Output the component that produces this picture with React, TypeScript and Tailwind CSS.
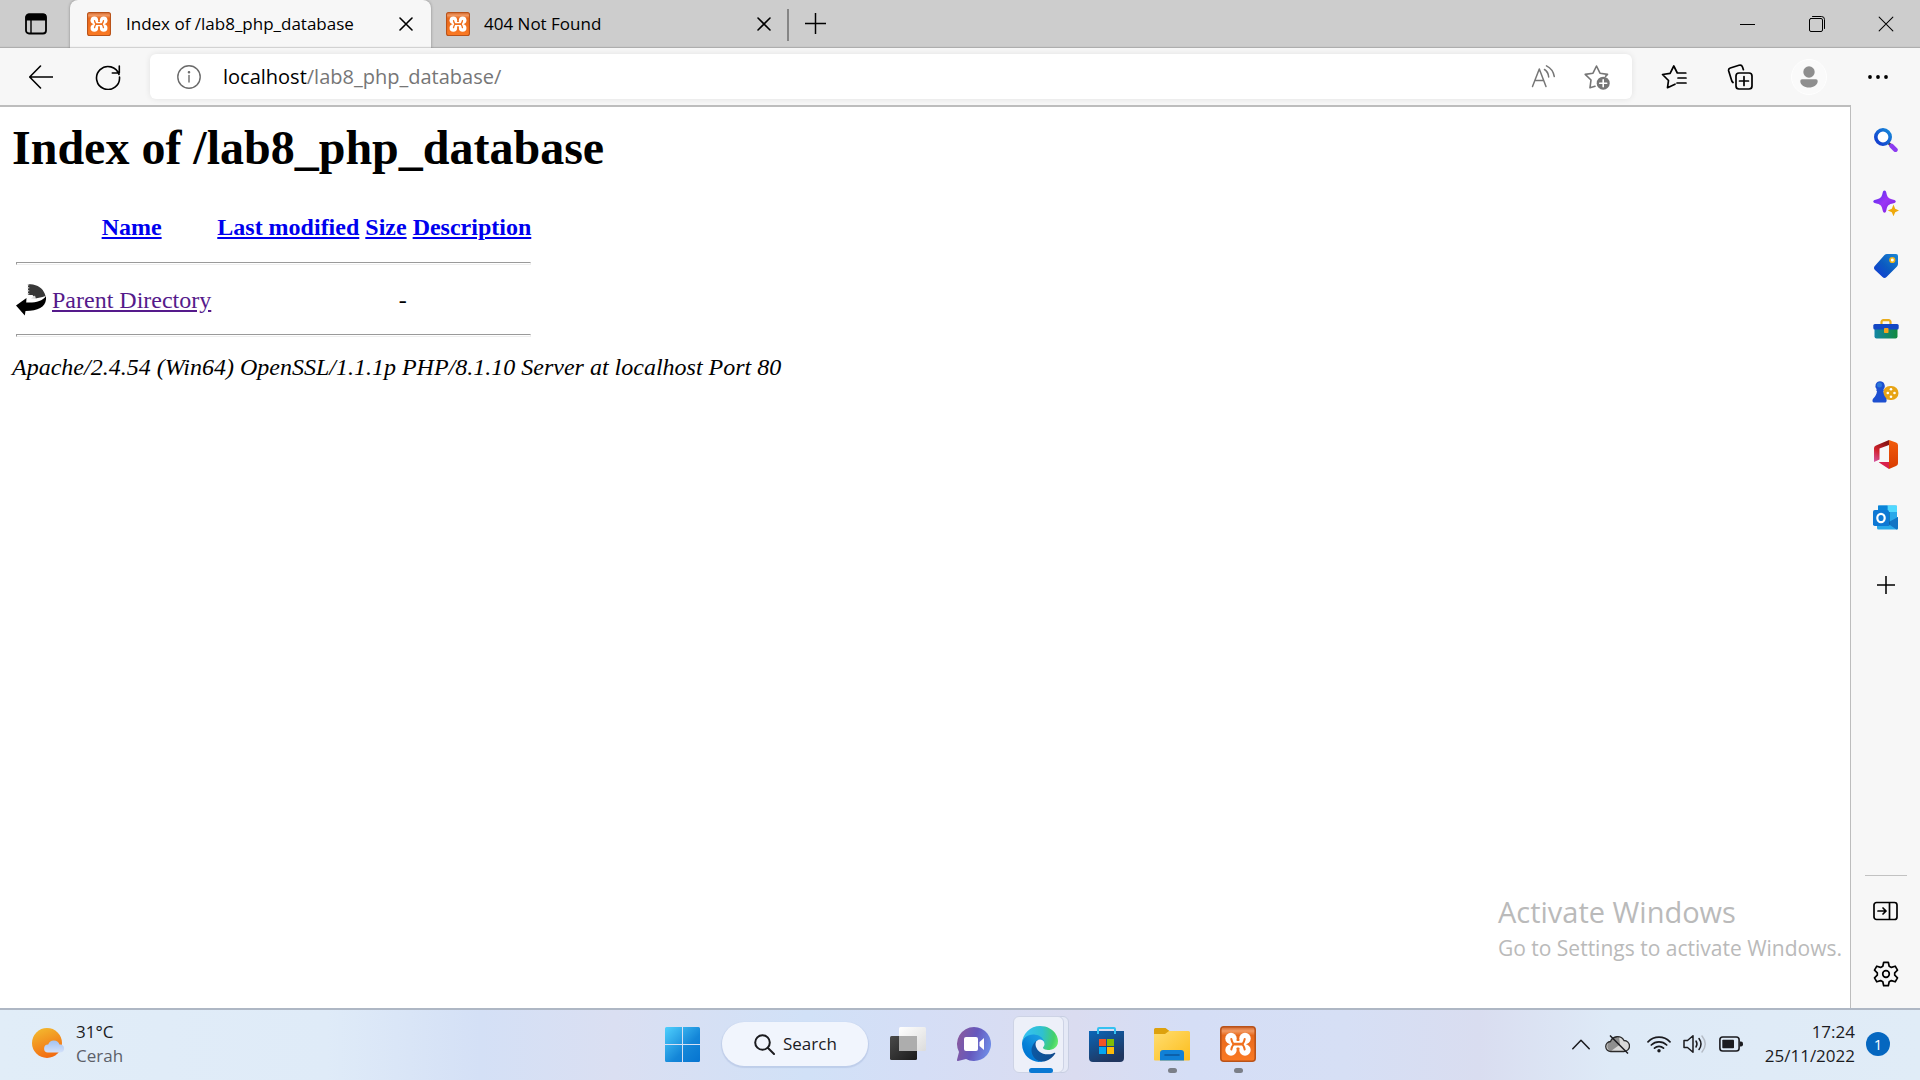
import React from 'react';

type IconProps = { className?: string };

const line = {
  fill: 'none',
  stroke: 'currentColor',
  strokeLinecap: 'round' as const,
  strokeLinejoin: 'round' as const,
};

function Xampp({ className = 'size-6', id }: IconProps & { id: string }) {
  return (
    <svg className={className} viewBox="0 0 36 36" aria-hidden="true">
      <defs>
        <linearGradient id={id} x1="0" y1="0" x2="0" y2="1">
          <stop offset="0" stopColor="#d0642a" />
          <stop offset="0.12" stopColor="#f29a63" />
          <stop offset="0.25" stopColor="#e8691c" />
          <stop offset="1" stopColor="#fb7a24" />
        </linearGradient>
      </defs>
      <rect x="0.8" y="0.8" width="34.4" height="34.4" rx="3" fill={`url(#${id})`} stroke="#b9531a" strokeWidth="1.6" />
      <g fill="#fff">
        <circle cx="11" cy="12.500" r="5.700" />
        <circle cx="25" cy="12.500" r="5.700" />
        <circle cx="11" cy="24" r="5.700" />
        <circle cx="25" cy="24" r="5.700" />
        <path d="M8.500 15h19l-1.500 3.200 1.500 3.300h-19L10 18.200zM14 13l4 2.500 4-2.500v10.500L18 21l-4 2.500z" />
      </g>
      <path
        d="M11.300 13q.4 2.600 2.200 5.200-1.800 2.600-2.200 5.300M24.700 13q-.4 2.600-2.200 5.200 1.800 2.600 2.200 5.300"
        fill="none"
        stroke="#f0701f"
        strokeWidth="2"
        strokeLinecap="round"
      />
      <path d="M14 18.200h8" stroke="#f0701f" strokeWidth="2.800" strokeLinecap="round" />
    </svg>
  );
}

function Cross({ className = 'size-3.5', width = 1.6 }: IconProps & { width?: number }) {
  return (
    <svg className={className} viewBox="0 0 14 14" {...line} strokeWidth={width} aria-hidden="true">
      <path d="M1 1l12 12M13 1L1 13" />
    </svg>
  );
}

function Plus({ className, width = 1.6 }: IconProps & { width?: number }) {
  return (
    <svg className={className} viewBox="0 0 20 20" {...line} strokeLinecap="butt" strokeWidth={width} aria-hidden="true">
      <path d="M10 0v20M0 10h20" />
    </svg>
  );
}

function TabStrip() {
  return (
    <header className="flex h-12 shrink-0 items-stretch bg-[#cdcdcd]">
      <button aria-label="Tab actions menu" className="flex w-[70px] items-center justify-center pl-0.5">
        <svg className="size-[22px]" viewBox="0 0 22 22" {...line} strokeWidth="1.800" aria-hidden="true">
          <rect x="1" y="1.500" width="20" height="19" rx="3" />
          <path d="M1.500 5V4a2.500 2.500 0 0 1 2.500-2.500h14A2.500 2.500 0 0 1 20.500 4v2.500h-19z" fill="currentColor" />
          <path d="M6 7v13" strokeWidth="1.400" />
        </svg>
      </button>
      <div role="tablist" className="flex">
        <div role="tab" aria-selected="true" className="flex w-[361px] items-center rounded-t-lg bg-[#f7f7f7] pl-[17px] pr-[18px] shadow-[0_0_3px_rgba(0,0,0,0.35)]">
          <Xampp id="fav-a" />
          <span className="ml-[15px] flex-1 whitespace-nowrap text-[17px] leading-6">Index of /lab8_php_database</span>
          <button aria-label="Close tab">
            <Cross />
          </button>
        </div>
        <div role="tab" aria-selected="false" className="flex w-[358px] items-center border-r-2 border-[#858585] [border-image:linear-gradient(transparent_10px,#858585_10px,#858585_40px,transparent_40px)_2] pl-[15px] pr-4">
          <Xampp id="fav-b" />
          <span className="ml-[14px] flex-1 whitespace-nowrap text-[17px] leading-6">404 Not Found</span>
          <button aria-label="Close tab">
            <Cross />
          </button>
        </div>
      </div>
      <button aria-label="New tab" className="flex w-[52px] items-center justify-center pb-0.5">
        <Plus className="size-[21px]" width={1.400} />
      </button>
      <div className="flex-1" />
      <button aria-label="Minimize" className="flex w-[69px] items-center justify-center">
        <svg className="h-[3px] w-[15px]" viewBox="0 0 15 3" aria-hidden="true">
          <path d="M0 1.500h15" stroke="#000" />
        </svg>
      </button>
      <button aria-label="Restore" className="flex w-[69px] items-center justify-center">
        <svg className="size-4" viewBox="0 0 16 16" {...line} aria-hidden="true">
          <rect x="0.500" y="2.500" width="13" height="13" rx="1.500" />
          <path d="M3.500.5h9a3 3 0 0 1 3 3v9" />
        </svg>
      </button>
      <button aria-label="Close" className="flex w-[69px] items-center justify-center">
        <Cross className="size-4" width={0.900} />
      </button>
    </header>
  );
}

function Toolbar() {
  return (
    <nav className="flex h-[57px] shrink-0 items-center bg-[#f7f7f7] shadow-[0_-1px_1px_rgba(0,0,0,0.15)]">
      <button aria-label="Back" className="flex w-[82px] justify-center">
        <svg className="size-6" viewBox="0 0 24 24" {...line} strokeWidth="1.600" aria-hidden="true">
          <path d="M23.500 12H.8M11.500 1L.7 12l10.800 11" />
        </svg>
      </button>
      <button aria-label="Refresh" className="flex w-[52px] justify-center">
        <svg className="size-[26px]" viewBox="0 0 26 26" {...line} strokeWidth="1.600" aria-hidden="true">
          <path d="M24 10.500A11.500 11.500 0 1 0 24.500 13M24.300 2v7h-7" />
        </svg>
      </button>
      <div className="ml-4 flex h-[45px] flex-1 items-center rounded-md bg-white pl-[27px] pr-[22px] shadow-[0_0_6px_rgba(0,0,0,0.09)]">
        <svg className="size-6 text-[#6b6b6b]" viewBox="0 0 24 24" {...line} strokeWidth="1.400" aria-hidden="true">
          <circle cx="12" cy="12" r="11.200" />
          <path d="M12 10.500v6.500" />
          <circle cx="12" cy="7.200" r="0.600" fill="currentColor" />
        </svg>
        <div className="ml-[22px] flex-1 whitespace-nowrap text-[20px] leading-7 text-[#767676]">
          <span className="text-black">localhost</span>/lab8_php_database/
        </div>
        <button aria-label="Read aloud" className="text-[#767676]">
          <svg className="size-6" viewBox="0 0 24 24" {...line} strokeWidth="1.500" aria-hidden="true">
            <path d="M1.500 21.500L8.300 4l6.700 17.500M4 15.500h8.500M13.500 4.500q3.800 2.500 4.200 7.500M15.500.8Q22 4 23.300 11.500" />
          </svg>
        </button>
        <button aria-label="Add to favorites" className="ml-[29px] text-[#767676]">
          <svg className="size-[26px]" viewBox="0 0 26 26" {...line} strokeWidth="1.600" aria-hidden="true">
            <path d="M11 22.200l-5 1.500 1-7.700-5.800-5.600 7.800-1.200L12.500 2 16 9.200l7.500 1.200-2 2" />
            <circle cx="19.200" cy="19.200" r="6.500" fill="currentColor" stroke="none" />
            <path d="M19.200 15.700v7M15.700 19.200h7" stroke="#fff" />
          </svg>
        </button>
      </div>
      <button aria-label="Favorites" className="ml-2 flex w-[67px] justify-center">
        <svg className="size-[26px]" viewBox="0 0 26 26" {...line} strokeWidth="1.700" aria-hidden="true">
          <path d="M14 20.200l-7.500 3.500 1-7.200-6-6 7.600-1.200L12.800 2l3.500 7h8.500M17 14h8M16 19h9" />
        </svg>
      </button>
      <button aria-label="Collections" className="flex w-[66px] justify-center">
        <svg className="size-[26px]" viewBox="0 0 26 26" {...line} strokeWidth="1.700" aria-hidden="true">
          <rect x="9" y="9" width="16" height="16" rx="3" />
          <path d="M17 12.500v9M12.500 17h9M6 18.500A4 4 0 0 1 4.500 16L1.700 7a2.500 2.500 0 0 1 1.600-3L12 1.300A2.800 2.800 0 0 1 15.500 3l.9 2.700" />
        </svg>
      </button>
      <button aria-label="Profile" className="ml-[18px] mr-[17px] flex size-9 items-center justify-center rounded-full border border-white bg-[#fafafa]">
        <svg className="size-[22px] text-[#8e8e8e]" viewBox="0 0 22 22" fill="currentColor" aria-hidden="true">
          <circle cx="11" cy="6" r="5.700" />
          <path d="M4 13.300h14a1.700 1.700 0 0 1 1.700 1.700c0 4-4 6.500-8.700 6.500S2.300 19 2.300 15A1.700 1.700 0 0 1 4 13.300z" />
        </svg>
      </button>
      <button aria-label="Settings and more" className="mr-2 flex w-[68px] justify-center">
        <svg className="h-1 w-5" viewBox="0 0 20 4" aria-hidden="true">
          <circle cx="2" cy="2" r="1.900" />
          <circle cx="10" cy="2" r="1.900" />
          <circle cx="18" cy="2" r="1.900" />
        </svg>
      </button>
    </nav>
  );
}

function Rule() {
  return (
    <tr>
      <td colSpan={5}>
        <hr className="my-3 h-[3px] border border-[#9a9a9a] border-b-[#eeeeee] border-r-[#eeeeee]" />
      </td>
    </tr>
  );
}

function DirectoryIndex() {
  const heads = ['Last modified', 'Size', 'Description'];
  return (
    <main className="relative min-w-0 flex-1 border-r border-[#bdbdbd] bg-white p-3 font-['Liberation_Serif',serif] text-2xl leading-7">
      <h1 className="mb-[30px] text-5xl leading-[57px] font-bold">Index of /lab8_php_database</h1>
      <table className="border-separate border-spacing-[2px] [&_td]:p-[2px] [&_th]:p-[2px]">
        <thead>
          <tr className="h-[38px]">
            <th className="w-[33px]" />
            <th>
              <a href="#name" className="text-[#0000ee] underline">Name</a>
            </th>
            {heads.map((h) => (
              <th key={h}>
                <a href="#sort" className="whitespace-nowrap text-[#0000ee] underline">{h}</a>
              </th>
            ))}
          </tr>
        </thead>
        <tbody>
          <Rule />
          <tr>
            <td>
              <svg className="h-[33px] w-[30px]" viewBox="0 0 30 33" aria-hidden="true">
                <path d="M12 1l5 .5C24 3 28 7 29.500 13l-3 1-7 1.500-3-3.500H12z" fill="#383838" />
                <path d="M12.500 1v11.500" stroke="#b5b5b5" strokeWidth="1.500" strokeDasharray="1.500 1.500" />
                <path d="M15 15.500l4-3 1 3.500z" fill="#ddd" />
                <path d="M30 13c1 10-6 15-20.500 15l-.7 4.500L0 22.500l10.500-7.500-.3 4.500c9 .5 16-1 19.800-6.500z" fill="#000" />
              </svg>
            </td>
            <td>
              <a href="#parent" className="whitespace-nowrap text-[#551a8b] underline">Parent Directory</a>
            </td>
            <td />
            <td className="text-right">-</td>
            <td />
          </tr>
          <Rule />
        </tbody>
      </table>
      <address className="italic">Apache/2.4.54 (Win64) OpenSSL/1.1.1p PHP/8.1.10 Server at localhost Port 80</address>
      <aside className="absolute right-2 bottom-11 font-['Open_Sans',sans-serif] text-[#bababa]">
        <p className="text-[29px] leading-10">Activate Windows</p>
        <p className="text-[21px] leading-8">Go to Settings to activate Windows.</p>
      </aside>
    </main>
  );
}

const SearchIcon = () => (
  <svg className="size-6" viewBox="0 0 24 24" aria-hidden="true">
    <defs>
      <linearGradient id="lens" x1="1" y1="0" x2="0" y2="1">
        <stop offset="0" stopColor="#1789d8" />
        <stop offset="1" stopColor="#1338cf" />
      </linearGradient>
    </defs>
    <path d="M14.500 15l3 3" stroke="#444" strokeWidth="2.500" />
    <path d="M17.500 17.800l4 4" stroke="#8c3cf0" strokeWidth="4.500" strokeLinecap="round" />
    <circle cx="9" cy="9" r="7.200" fill="#fff" stroke="url(#lens)" strokeWidth="3.600" />
  </svg>
);

const SparkleIcon = () => (
  <svg className="size-[26px]" viewBox="0 0 26 26" aria-hidden="true">
    <defs>
      <linearGradient id="spark" x1="0" y1="0" x2="1" y2="1">
        <stop offset="0" stopColor="#4b2ff0" />
        <stop offset="0.500" stopColor="#9a35f5" />
        <stop offset="1" stopColor="#7a1ee0" />
      </linearGradient>
    </defs>
    <path d="M11.500.5c1 0 1.500.7 1.800 2 1 5 2.200 6.200 7.200 7.200 3 .7 3 2.900 0 3.600-5 1-6.200 2.200-7.200 7.200-.7 3-2.900 3-3.600 0-1-5-2.200-6.200-7.200-7.200-3-.7-3-2.900 0-3.600 5-1 6.200-2.200 7.200-7.200.3-1.300.8-2 1.800-2z" fill="url(#spark)" />
    <path d="M20.500 14.500l1.700 4.300 4 1.700-4 1.700-1.700 4-1.700-4-4-1.700 4-1.700z" fill="#efa90c" />
  </svg>
);

const TagIcon = () => (
  <svg className="size-[26px]" viewBox="0 0 26 26" aria-hidden="true">
    <defs>
      <linearGradient id="tag" x1="1" y1="0" x2="0" y2="1">
        <stop offset="0" stopColor="#1a86d6" />
        <stop offset="0.500" stopColor="#0c5cc0" />
        <stop offset="1" stopColor="#1437d8" />
      </linearGradient>
    </defs>
    <path d="M14 1h9a2 2 0 0 1 2 2v8a4 4 0 0 1-1 2.500L13.500 24a3 3 0 0 1-4 0L2 17a3 3 0 0 1 0-4.200L11.500 2A4 4 0 0 1 14 1z" fill="url(#tag)" />
    <circle cx="19.300" cy="7" r="2.300" fill="#fff" stroke="#f0b414" strokeWidth="1.600" />
  </svg>
);

const ToolboxIcon = () => (
  <svg className="h-5 w-[26px]" viewBox="0 0 26 20" aria-hidden="true">
    <defs>
      <linearGradient id="box" x1="0" y1="0" x2="1" y2="0">
        <stop offset="0" stopColor="#1285a5" />
        <stop offset="1" stopColor="#138a3d" />
      </linearGradient>
    </defs>
    <path d="M8.500 6V3A1.800 1.800 0 0 1 10.300 1.200h5.400A1.800 1.800 0 0 1 17.500 3v3" fill="none" stroke="#e9ac1c" strokeWidth="2.200" />
    <path d="M1.500 9h23v8.500a2 2 0 0 1-2 2h-19a2 2 0 0 1-2-2z" fill="url(#box)" />
    <rect x="0.300" y="5" width="25.400" height="5.500" rx="1.500" fill="#1347c4" />
    <rect x="11" y="9" width="4.500" height="5" rx="0.800" fill="#f6a31a" />
  </svg>
);

const GamesIcon = () => (
  <svg className="h-[22px] w-[27px]" viewBox="0 0 27 22" aria-hidden="true">
    <rect x="11" y="5" width="15.500" height="14" rx="7" fill="#e7a416" />
    <g fill="#fff">
      <circle cx="19" cy="8.300" r="1.300" />
      <circle cx="15.800" cy="12" r="1.300" />
      <circle cx="22.500" cy="12" r="1.300" />
      <circle cx="19" cy="15.700" r="1.300" />
    </g>
    <path d="M8 .3a4.700 4.700 0 0 1 3.400 8c.6.600.6 1.500-.2 1.700.3 3 1.200 5 2.800 7 1 1 .8 4.500-.5 4.500H1.800C.3 21.500 0 18.500 1.500 17.300 3.500 15.500 4.700 13 5 10c-.9-.2-.9-1.200-.3-1.700A4.700 4.700 0 0 1 8 .3z" fill="#1d4fd0" />
    <circle cx="7.500" cy="4" r="2.500" fill="#2c77d8" />
  </svg>
);

const OfficeIcon = () => (
  <svg className="h-[29px] w-6" viewBox="0 0 24 29" aria-hidden="true">
    <defs>
      <linearGradient id="office" x1="0.500" y1="0" x2="0" y2="1">
        <stop offset="0" stopColor="#8c1414" />
        <stop offset="0.500" stopColor="#d3232f" />
        <stop offset="1" stopColor="#d459a8" />
      </linearGradient>
      <linearGradient id="office-r" x1="0" y1="0" x2="0" y2="1">
        <stop offset="0" stopColor="#f25c0c" />
        <stop offset="1" stopColor="#d83b01" />
      </linearGradient>
    </defs>
    <path d="M15 0L2 5.500A3 3 0 0 0 0 8.500V22l5.500-2.500v-11L15 5z" fill="url(#office)" />
    <path d="M5 22.500L15 29v-7H6.500C5 22 4.500 22.200 5 22.500z" fill="#d9214c" />
    <path d="M15 0l7 2.500a3 3 0 0 1 2 2.800v18a3 3 0 0 1-2 2.800L15 29z" fill="url(#office-r)" />
  </svg>
);

const OutlookIcon = () => (
  <svg className="size-[25px]" viewBox="0 0 25 25" aria-hidden="true">
    <path d="M5 2a1.500 1.500 0 0 1 1.500-1.500h16A1.500 1.500 0 0 1 24 2v13H5z" fill="#28a8ea" />
    <path d="M14.500.5H24V7h-9.500z" fill="#50d9ff" />
    <path d="M5 .5h9.500V7H5z" fill="#0a84d8" />
    <path d="M4 14l21-2v11a1.500 1.500 0 0 1-1.500 1.500h-18A1.500 1.500 0 0 1 4 23z" fill="#28a8ea" />
    <path d="M25 12L14 18l9.500 6.500A1.500 1.500 0 0 0 25 23z" fill="#1474c4" />
    <path d="M17 7v12a2 2 0 0 1-2 2H5V7z" fill="#0a4d86" opacity="0.500" />
    <rect x="0" y="5" width="16" height="16" rx="1.800" fill="#0f78d4" />
    <ellipse cx="8" cy="13" rx="3.700" ry="4.200" fill="none" stroke="#fff" strokeWidth="2.200" />
  </svg>
);

function Sidebar() {
  const apps: [string, () => React.JSX.Element][] = [
    ['Search', SearchIcon],
    ['Discover', SparkleIcon],
    ['Shopping', TagIcon],
    ['Tools', ToolboxIcon],
    ['Games', GamesIcon],
    ['Office', OfficeIcon],
    ['Outlook', OutlookIcon],
  ];
  return (
    <aside className="flex w-[69px] shrink-0 flex-col bg-[#f7f7f7] pt-[3px] pb-[3px]">
      {apps.map(([name, Icon]) => (
        <button key={name} aria-label={name} className="flex h-[63px] items-center justify-center">
          <Icon />
        </button>
      ))}
      <button aria-label="Customize sidebar" className="mt-1 flex h-[63px] items-center justify-center">
        <Plus className="size-[18px]" width={1.700} />
      </button>
      <div className="mx-auto mt-auto mb-[3px] h-px w-[42px] bg-[#c2c2c2]" />
      <button aria-label="Hide sidebar" className="flex h-[63px] items-center justify-center">
        <svg className="h-5 w-[25px]" viewBox="0 0 25 20" {...line} strokeWidth="1.700" aria-hidden="true">
          <rect x="1" y="1.500" width="23" height="17" rx="2.500" />
          <path d="M16.500 2v16M5 10h8M10 7l3 3-3 3" />
        </svg>
      </button>
      <button aria-label="Settings" className="flex h-[63px] items-center justify-center">
        <svg className="size-[26px]" viewBox="0 0 26 26" {...line} strokeWidth="1.700" aria-hidden="true">
          <circle cx="13" cy="13" r="3.300" />
          <path d="M10.700 1.300h4.600l.9 3.900 2.200 1.200 3.800-1.200 2.300 4-2.800 2.600v2.400l2.800 2.600-2.300 4-3.800-1.200-2.200 1.200-.9 3.900h-4.600l-.9-3.900-2.200-1.200-3.800 1.200-2.300-4 2.800-2.600v-2.400L1.500 9.200l2.300-4 3.800 1.200 2.200-1.200z" />
        </svg>
      </button>
    </aside>
  );
}

function Slot({ label, children, running }: { label: string; children: React.ReactNode; running?: boolean }) {
  return (
    <button aria-label={label} className="relative flex h-full w-[66px] items-center justify-center">
      {children}
      {running && <span className="absolute bottom-[5px] h-[5px] w-[9px] rounded-full bg-[#7b7f88]" />}
    </button>
  );
}

function Taskbar() {
  return (
    <footer className="grid h-[72px] shrink-0 grid-cols-[1fr_auto_1fr] items-stretch border-t-2 border-[#aeb7c4] bg-[linear-gradient(90deg,#e1edf8_0%,#dfebf8_17%,#d4e0f6_25%,#dadff2_32%,#d1e1f7_42%,#d5def6_48%,#dadcf0_56%,#d5def6_62%,#d6dff5_70%,#d9ddf0_77%,#deeaf7_84%,#e0ecf7_100%)] pb-[2px]">
      <button aria-label="Weather" className="flex items-center pl-8 text-left">
        <svg className="h-8 w-[34px]" viewBox="0 0 34 32" aria-hidden="true">
          <defs>
            <linearGradient id="sun" x1="0.300" y1="0" x2="0.700" y2="1">
              <stop offset="0" stopColor="#f3b72e" />
              <stop offset="1" stopColor="#f2660f" />
            </linearGradient>
            <linearGradient id="cloud" x1="0" y1="0" x2="0" y2="1">
              <stop offset="0" stopColor="#a3c2f2" />
              <stop offset="1" stopColor="#d3e1fa" />
            </linearGradient>
          </defs>
          <circle cx="15" cy="15" r="15" fill="url(#sun)" />
          <path d="M16 24.500a4 4 0 0 1 .2-8A6 6 0 0 1 27.500 16.500a4 4 0 0 1 1 8z" fill="url(#cloud)" />
        </svg>
        <span className="ml-[10px] text-[17px] leading-6 text-[#1b1b1f]">
          31°C
          <span className="block text-[#5c6068]">Cerah</span>
        </span>
      </button>

      <div className="flex items-center">
        <Slot label="Start">
          <svg className="size-[35px]" viewBox="0 0 35 35" aria-hidden="true">
            <defs>
              <linearGradient id="win" x1="0" y1="0" x2="1" y2="1" gradientUnits="objectBoundingBox">
                <stop offset="0" stopColor="#4fd0fd" />
                <stop offset="0.600" stopColor="#1486d8" />
                <stop offset="1" stopColor="#0674d0" />
              </linearGradient>
            </defs>
            <path d="M1.500 0H17v17H0V1.500A1.500 1.500 0 0 1 1.500 0zM18 0h15.500A1.500 1.500 0 0 1 35 1.500V17H18zM0 18h17v17H1.500A1.500 1.500 0 0 1 0 33.500zM18 18h17v15.500a1.500 1.500 0 0 1-1.500 1.500H18z" fill="url(#win)" />
          </svg>
        </Slot>
        <button className="mx-[7px] flex h-11 w-[146px] items-center rounded-full bg-[#f1f5fd] pl-8 text-[17px] text-[#1b1b1f] shadow-[0_1px_1px_1px_rgba(120,140,190,0.22)]">
          <svg className="size-[21px]" viewBox="0 0 21 21" {...line} strokeWidth="2" aria-hidden="true">
            <circle cx="8.500" cy="8.500" r="7.300" />
            <path d="M14 14l6 6" />
          </svg>
          <span className="ml-2">Search</span>
        </button>
        <Slot label="Task view">
          <svg className="size-9" viewBox="0 0 36 36" aria-hidden="true">
            <defs>
              <linearGradient id="tv" x1="0" y1="0" x2="1" y2="1">
                <stop offset="0" stopColor="#4a4a4a" />
                <stop offset="1" stopColor="#1a1a1a" />
              </linearGradient>
              <linearGradient id="tw" x1="0" y1="0" x2="1" y2="1">
                <stop offset="0" stopColor="#ffffff" />
                <stop offset="1" stopColor="#dcdcdc" />
              </linearGradient>
            </defs>
            <rect x="0" y="10" width="27" height="24" rx="1.500" fill="url(#tv)" />
            <rect x="9" y="1" width="27" height="24" rx="1.500" fill="url(#tw)" />
            <path d="M9 10h18v15H9z" fill="#adadad" />
          </svg>
        </Slot>
        <Slot label="Chat">
          <svg className="size-[34px]" viewBox="0 0 34 34" aria-hidden="true">
            <defs>
              <linearGradient id="chat" x1="0" y1="0.300" x2="1" y2="0.600">
                <stop offset="0" stopColor="#8a5a9e" />
                <stop offset="0.500" stopColor="#6558bd" />
                <stop offset="1" stopColor="#6f8ee8" />
              </linearGradient>
            </defs>
            <path d="M17 0a17 17 0 1 1-8 32L1 34c-.8.200-1.200-.5-1-1.200L2 25A17 17 0 0 1 17 0z" fill="url(#chat)" />
            <rect x="7" y="10" width="14" height="14" rx="2" fill="#fff" />
            <path d="M22.500 15l4.500-4v12l-4.500-4z" fill="#fff" />
          </svg>
        </Slot>
        <button aria-label="Microsoft Edge" className="relative flex h-full w-[66px] items-center justify-center">
          <span className="absolute top-[6px] right-1 h-[57px] w-10 rounded-md border border-[#c8cfe2] bg-[#e5e9f6]" />
          <span className="absolute top-[6px] left-[6px] h-[57px] w-[51px] rounded-md border border-[#cdd3e5] bg-[#edf0f9]" />
          <svg className="relative size-9" viewBox="0 0 256 256" aria-hidden="true">
            <defs>
              <linearGradient id="edge-a" x1="63" y1="177" x2="241" y2="177" gradientUnits="userSpaceOnUse">
                <stop offset="0" stopColor="#0c59a4" />
                <stop offset="1" stopColor="#114a8b" />
              </linearGradient>
              <linearGradient id="edge-b" x1="157" y1="95" x2="46" y2="216" gradientUnits="userSpaceOnUse">
                <stop offset="0" stopColor="#1b9de2" />
                <stop offset="0.300" stopColor="#1595df" />
                <stop offset="0.700" stopColor="#0680d7" />
                <stop offset="1" stopColor="#0078d4" />
              </linearGradient>
              <radialGradient id="edge-c" cx="26" cy="50" r="240" gradientUnits="userSpaceOnUse">
                <stop offset="0" stopColor="#35c1f1" />
                <stop offset="0.500" stopColor="#2fc0d0" />
                <stop offset="0.850" stopColor="#44d06b" />
                <stop offset="1" stopColor="#66eb6e" />
              </radialGradient>
            </defs>
            <path d="M231 190.500c-3.400 1.800-6.900 3.400-10.500 4.700a101.900 101.900 0 0 1-35.900 6.500c-47.300 0-88.500-32.500-88.500-74.300a31.500 31.500 0 0 1 16.400-27.300c-42.800 1.800-53.800 46.400-53.800 72.500 0 74 68.100 81.400 82.800 81.400 7.900 0 19.800-2.300 27-4.600l1.300-.4a128.300 128.300 0 0 0 66.600-52.800 4 4 0 0 0-5.400-5.700z" fill="url(#edge-a)" />
            <path d="M105.700 241.400a79.200 79.200 0 0 1-22.700-21.300 80.700 80.700 0 0 1 29.500-120c3.200-1.500 8.500-4.100 15.600-4a32.400 32.400 0 0 1 25.700 13 31.900 31.900 0 0 1 6.300 18.700c0-.2 24.500-79.600-80-79.600-43.900 0-80 41.700-80 78.200a130.200 130.200 0 0 0 12.100 56 128 128 0 0 0 156.400 67 75.500 75.500 0 0 1-62.800-8z" fill="url(#edge-b)" />
            <path d="M152.300 148.900c-.8 1-3.300 2.500-3.300 5.700 0 2.600 1.700 5.100 4.700 7.200 14.400 10 41.500 8.700 41.600 8.700a59.600 59.600 0 0 0 30.300-8.300 61.400 61.400 0 0 0 30.400-52.900c.3-22.400-8-37.300-11.300-43.900C223.500 23.900 177.700 0 128 0A128 128 0 0 0 0 126.200c.5-36.500 36.800-66 80-66 3.500 0 23.500.3 42 10a72.600 72.600 0 0 1 30.900 29.300c6.100 10.600 7.200 24.100 7.200 29.500s-2.700 13.300-7.800 19.900z" fill="url(#edge-c)" />
          </svg>
          <span className="absolute bottom-[5px] left-[22px] h-[5px] w-6 rounded-full bg-[#0a79d3]" />
        </button>
        <Slot label="Microsoft Store">
          <svg className="size-[35px]" viewBox="0 0 35 35" aria-hidden="true">
            <defs>
              <linearGradient id="store" x1="0" y1="0" x2="0.500" y2="1">
                <stop offset="0" stopColor="#0a66b8" />
                <stop offset="1" stopColor="#20365f" />
              </linearGradient>
            </defs>
            <path d="M0 4h35v27a4 4 0 0 1-4 4H4a4 4 0 0 1-4-4z" fill="url(#store)" />
            <path d="M9 7V2a1 1 0 0 1 1-1h15a1 1 0 0 1 1 1v5" fill="none" stroke="#35c1f1" strokeWidth="2" />
            <path d="M10 12h7v7h-7z" fill="#f35325" />
            <path d="M18 12h7v7h-7z" fill="#81bc06" />
            <path d="M10 20h7v7h-7z" fill="#05a6f0" />
            <path d="M18 20h7v7h-7z" fill="#ffba08" />
          </svg>
        </Slot>
        <Slot label="File Explorer" running>
          <svg className="size-9" viewBox="0 0 36 36" aria-hidden="true">
            <defs>
              <linearGradient id="folder" x1="0" y1="0" x2="1" y2="1">
                <stop offset="0" stopColor="#ffdd70" />
                <stop offset="1" stopColor="#fcbd1c" />
              </linearGradient>
            </defs>
            <path d="M0 3.500A1.500 1.500 0 0 1 1.500 2h10l4 3v6H0z" fill="#dda10d" />
            <path d="M0 8h11l4-3h19.500A1.500 1.500 0 0 1 36 6.500v27a1 1 0 0 1-1 1H1a1 1 0 0 1-1-1z" fill="url(#folder)" />
            <path d="M6 34.500V27a3 3 0 0 1 3-3h18a3 3 0 0 1 3 3v7.500z" fill="#1080d6" />
            <path d="M11 29h14" stroke="#0b559c" strokeWidth="1.600" strokeLinecap="round" />
          </svg>
        </Slot>
        <Slot label="XAMPP" running>
          <Xampp id="xampp-task" className="size-9" />
        </Slot>
      </div>

      <div className="flex items-center justify-end pr-[30px] text-[#1b1b1f]">
        <button aria-label="Show hidden icons">
          <svg className="h-[11px] w-[18px]" viewBox="0 0 18 11" {...line} strokeWidth="1.500" aria-hidden="true">
            <path d="M.8 9.800L9 1.200l8.200 8.600" />
          </svg>
        </button>
        <button aria-label="OneDrive" className="ml-[15px]">
          <svg className="h-5 w-[25px]" viewBox="0 0 25 20" aria-hidden="true">
            <path d="M6 17.500a5 5 0 0 1-.5-10A7.500 7.500 0 0 1 19 6.500a5.500 5.500 0 0 1 0 11z" fill="#d9d9d9" />
            <path d="M6 17a5 5 0 0 1-.5-9.500A7.500 7.500 0 0 1 14 2.500l1 8z" fill="#8f8f8f" />
            <path d="M6 17.500a5 5 0 0 1-.5-10A7.500 7.500 0 0 1 19 6.500a5.500 5.500 0 0 1 0 11z" fill="none" stroke="#2a2a2a" strokeWidth="1.300" />
            <path d="M5 1.500l18 18" stroke="#1b1b1f" strokeWidth="1.500" />
          </svg>
        </button>
        <button aria-label="Network, volume and battery" className="ml-[17px] flex items-center gap-3">
          <svg className="h-[18px] w-6" viewBox="0 0 24 18" {...line} strokeWidth="1.700" aria-hidden="true">
            <path d="M1 6.800a15.500 15.500 0 0 1 22 0M4.300 10a11 11 0 0 1 15.400 0M7.500 13.200a6.500 6.500 0 0 1 9 0" />
            <circle cx="12" cy="15.700" r="1.700" fill="currentColor" stroke="none" />
          </svg>
          <svg className="h-5 w-6" viewBox="0 0 24 20" {...line} strokeWidth="1.500" aria-hidden="true">
            <path d="M1 6.500h3.500L10 1.700v16.600l-5.500-4.800H1z" />
            <path d="M13 7q2 3 0 6M16 4.500q4 5.500 0 11" />
            <path d="M19 2q6.500 8 0 16" stroke="#b5bcc6" />
          </svg>
          <svg className="h-4 w-6" viewBox="0 0 24 16" aria-hidden="true">
            <rect x="0.900" y="1" width="19.200" height="14" rx="2.800" fill="none" stroke="#1b1b1f" strokeWidth="1.600" />
            <rect x="3.300" y="3.800" width="11.700" height="8.500" rx="0.800" fill="#1b1b1f" />
            <path d="M21 5.500h1a2 2 0 0 1 2 2v1a2 2 0 0 1-2 2h-1z" fill="#1b1b1f" />
          </svg>
        </button>
        <button className="ml-[22px] text-right text-[17px] leading-6">
          17:24
          <span className="block">25/11/2022</span>
        </button>
        <button aria-label="1 notification" className="ml-[11px] flex size-6 items-center justify-center rounded-full bg-[#0567c0] text-[15px] text-white">
          1
        </button>
      </div>
    </footer>
  );
}

export default function App() {
  return (
    <div className="flex h-screen flex-col overflow-hidden bg-white font-['Open_Sans','Noto_Sans',sans-serif] text-black">
      <TabStrip />
      <Toolbar />
      <div className="flex min-h-0 flex-1 bg-[#f7f7f7]">
        <div className="flex min-w-0 flex-1 border-t-2 border-[#bdbdbd]">
          <DirectoryIndex />
        </div>
        <Sidebar />
      </div>
      <Taskbar />
    </div>
  );
}
